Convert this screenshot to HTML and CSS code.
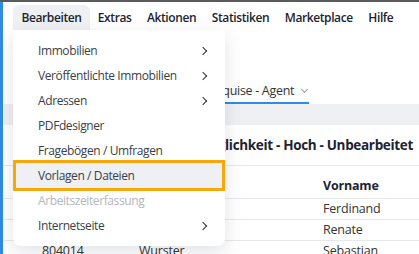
FILE: index.html
```html
<!DOCTYPE html>
<html><head>
<meta charset="utf-8">
<title>Vorlagen</title>
<link rel="stylesheet" href="styles.css">
</head>
<body>
<div class="topline"></div>
<div class="app">
	<div class="sidestrip"></div>
	<div class="main">
		<div class="menubar">
			<div class="mbitem open">Bearbeiten
				<div class="dropdown">
					<div class="ditem">Immobilien <span class="chev"></span></div>
					<div class="ditem">Veröffentlichte Immobilien <span class="chev"></span></div>
					<div class="ditem">Adressen <span class="chev"></span></div>
					<div class="ditem">PDFdesigner</div>
					<div class="ditem">Fragebögen / Umfragen</div>
					<div class="ditem focus">Vorlagen / Dateien</div>
					<div class="ditem disabled">Arbeitszeiterfassung</div>
					<div class="ditem">Internetseite <span class="chev"></span></div>
				</div>
			</div>
			<div class="mbitem">Extras</div>
			<div class="mbitem">Aktionen</div>
			<div class="mbitem">Statistiken</div>
			<div class="mbitem">Marketplace</div>
			<div class="mbitem">Hilfe</div>
		</div>

		<div class="tabs">
			<div class="tab">Übersicht</div>
			<div class="tab active">Exquise - Agent <span class="tabchev"></span></div>
		</div>
		<div class="band"></div>

		<h2 class="heading">Verkaufsmöglichkeit - Hoch - Unbearbeitet</h2>

		<div class="table">
			<div class="row head">
				<div>Nr.</div><div>Name</div><div>Vorname</div>
			</div>
			<div class="row"><div>804011</div><div>Baumann</div><div>Ferdinand</div></div>
			<div class="row"><div>804012</div><div>Keller</div><div>Renate</div></div>
			<div class="row"><div>804014</div><div>Wurster</div><div>Sebastian</div></div>
		</div>
	</div>
</div>
</body>
</html>
```

FILE: styles.css
```css
body {
	margin: 0;
	font-family: "Open Sans", "Noto Sans", Arial, sans-serif;
	color: #333;
	background: #fff;
	overflow: hidden;
}
.topline { height: 2px; background: #5b5b5b; }
.app { display: flex; }
.sidestrip {
	width: 3px;
	background: #2f8be6;
	min-height: 252px;
	flex: none;
}
.main { flex: 1; position: relative; }

/* Menüleiste */
.menubar {
	display: flex;
	height: 28px;
	padding: 3px 0 0 10px;
	box-sizing: border-box;
}
.mbitem {
	position: relative;
	padding: 0 7.8px;
	font-size: 12px;
	letter-spacing: -0.4px;
	font-weight: 600;
	color: #1d2330;
	line-height: 25px;
	border-radius: 6px 6px 0 0;
}
.mbitem.open { background: #eef0f3; padding: 0 8.5px; }

/* Dropdown */
.dropdown {
	position: absolute;
	left: 0;
	top: 25px;
	width: 212px;
	padding: 8px 0 8px;
	background: #fff;
	border-radius: 0 0 8px 8px;
	box-shadow: 0 6px 18px rgba(30, 40, 60, .13);
	z-index: 10;
	font-weight: 400;
	letter-spacing: 0;
}
.ditem {
	display: flex;
	justify-content: space-between;
	align-items: center;
	height: 25px;
	margin: 0 3px;
	padding: 0 15px 0 22px;
	font-size: 12px;
	letter-spacing: -0.4px;
	color: #3a3e45;
	line-height: 25px;
}
.ditem.focus {
	background: #eef0f3;
	outline: 3px solid #f7a70a;
}
.ditem.disabled { color: #b3b6bb; }
.chev {
	width: 5px;
	height: 5px;
	border-right: 1.6px solid #2a2f3a;
	border-bottom: 1.6px solid #2a2f3a;
	transform: rotate(-45deg);
	margin-right: 1px;
}

/* Inhalt dahinter */
.tabs {
	display: flex;
	margin-top: 49px;
	padding-left: 117px;
	height: 25px;
}
.tab {
	padding: 0 12px;
	font-size: 12.5px;
	letter-spacing: -0.3px;
	line-height: 22px;
	color: #333;
}
.tab.active {
	border-bottom: 2px solid #2f8be6;
	display: flex;
	align-items: center;
	gap: 6px;
	padding-right: 2px;
}
.tabchev {
	width: 4px;
	height: 4px;
	border-right: 1px solid #9aa0a8;
	border-bottom: 1px solid #9aa0a8;
	transform: rotate(45deg);
	margin: -3px 0 0 2px;
}
.band { height: 21px; background: #eef0f3; }
.heading {
	display: flex;
	justify-content: flex-end;
	margin: 0;
	height: 40px;
	line-height: 40px;
	padding-right: 6px;
	font-size: 13.5px;
	letter-spacing: -0.33px;
	font-weight: 700;
	color: #1d2330;
	white-space: nowrap;
	border-bottom: 1px solid #e6e8eb;
}
.table { font-size: 12.5px; letter-spacing: -0.2px; color: #333; }
.row {
	display: grid;
	grid-template-columns: 97px 184px 1fr;
	padding-left: 39px;
	height: 20px;
	line-height: 20px;
	border-bottom: 1px solid #e6e8eb;
}
.row.head {
	height: 32px;
	line-height: 40px;
	font-weight: 700;
	color: #1d2330;
}
```
